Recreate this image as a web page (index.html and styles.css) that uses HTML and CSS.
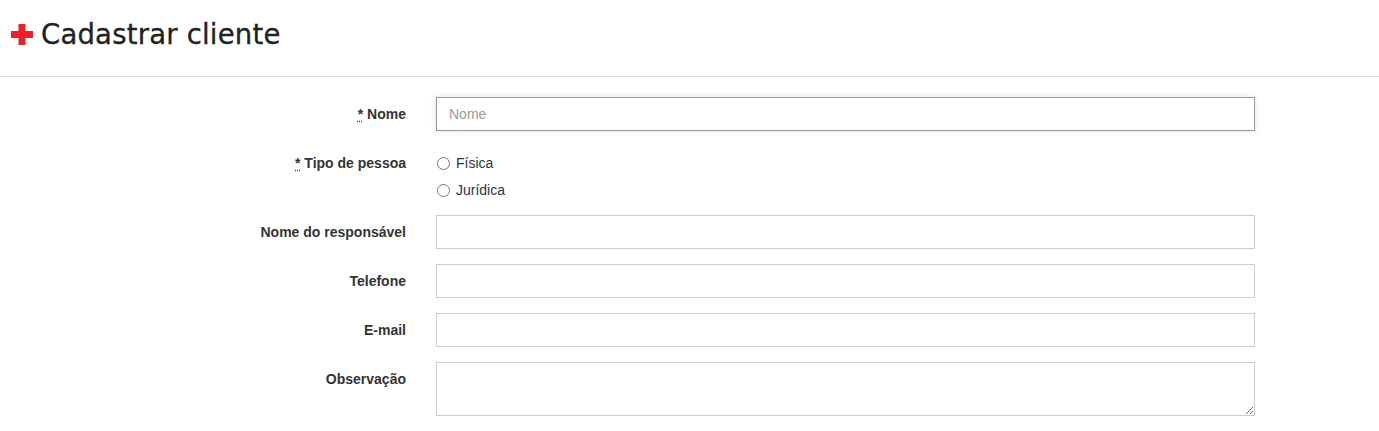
FILE: index.html
```html
<!DOCTYPE html>
<html lang="pt-BR">
<head>
<meta charset="utf-8">
<title>Cadastrar cliente</title>
<link rel="stylesheet" href="styles.css">
</head>
<body>
<header class="page-header">
  <h1 class="title">
    <svg class="plus" width="22" height="21" viewBox="0 0 22 21" aria-hidden="true">
      <path d="M7.5 0h7v7h7.5v7h-7.5v7h-7v-7h-7.5v-7h7.5z" fill="#e8202a"/>
    </svg>
    <span>Cadastrar cliente</span>
  </h1>
</header>
<form class="form">
  <div class="row">
    <label class="lbl" for="nome"><abbr title="obrigatório">*</abbr> Nome</label>
    <input id="nome" class="ctl focus" type="text" placeholder="Nome">
  </div>
  <div class="row">
    <label class="lbl"><abbr title="obrigatório">*</abbr> Tipo de pessoa</label>
    <div class="radios">
      <label class="radio"><input type="radio" name="tipo"> Física</label>
      <label class="radio"><input type="radio" name="tipo"> Jurídica</label>
    </div>
  </div>
  <div class="row">
    <label class="lbl" for="resp">Nome do responsável</label>
    <input id="resp" class="ctl" type="text">
  </div>
  <div class="row">
    <label class="lbl" for="tel">Telefone</label>
    <input id="tel" class="ctl" type="text">
  </div>
  <div class="row">
    <label class="lbl" for="email">E-mail</label>
    <input id="email" class="ctl" type="text">
  </div>
  <div class="row">
    <label class="lbl" for="obs">Observação</label>
    <textarea id="obs" class="ctl area"></textarea>
  </div>
</form>
</body>
</html>
```

FILE: styles.css
```css
* { box-sizing: border-box; }
html, body { margin: 0; padding: 0; background: #fff; }
body {
  font-family: "Liberation Sans", Arial, sans-serif;
  font-size: 14px;
  color: #333;
}
.page-header {
  border-bottom: 1px solid #ddd;
  height: 77px;
  padding: 16px 0 0 11px;
}
.title {
  margin: 0;
  display: flex;
  align-items: center;
  gap: 8px;
  font-family: "DejaVu Sans", sans-serif;
  font-weight: normal;
  font-size: 27.5px;
  line-height: 36px;
  color: #222;
  letter-spacing: 0.2px;
  -webkit-text-stroke: 0.3px #222;
}
.plus { flex: none; }
.form {
  padding-top: 20px;
  display: flex;
  flex-direction: column;
  gap: 15px;
}
.row {
  display: grid;
  grid-template-columns: 406px 819px;
  column-gap: 30px;
  align-items: start;
}
.lbl {
  text-align: right;
  font-weight: bold;
  font-size: 14px;
  padding-top: 7px;
  line-height: 20px;
}
abbr {
  text-decoration: underline dotted;
  text-underline-offset: 2px;
  cursor: help;
}
.ctl {
  display: block;
  width: 819px;
  height: 34px;
  border: 1px solid #ccc;
  border-radius: 0;
  padding: 6px 12px;
  font-family: "Liberation Sans", Arial, sans-serif;
  font-size: 14px;
  color: #555;
  background: #fff;
  outline: none;
}
.ctl::placeholder { color: #999; }
.ctl.focus {
  border-color: #999;
  box-shadow: 0 0 6px rgba(0,0,0,0.12);
}
.area { height: 54px; resize: vertical; }
.radios {
  padding-top: 7px;
  display: flex;
  flex-direction: column;
  gap: 7px;
}
.radio {
  display: flex;
  align-items: center;
  line-height: 20px;
  height: 20px;
  font-size: 14px;
}
.radio input {
  margin: 0 6px 0 1px;
  width: 13px;
  height: 13px;
}
```
